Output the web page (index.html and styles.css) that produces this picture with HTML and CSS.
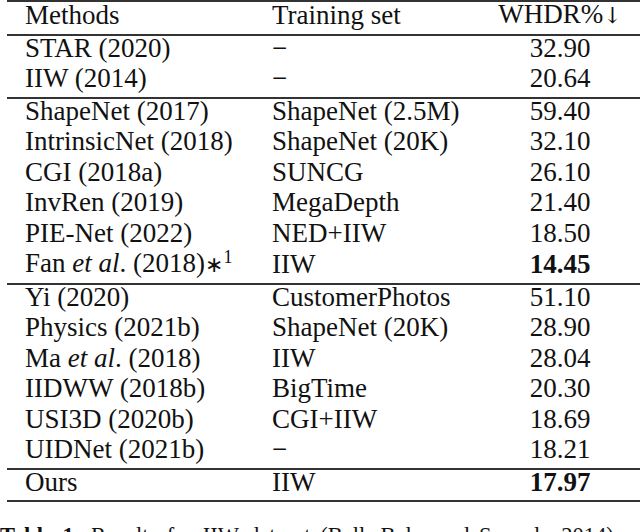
FILE: index.html
```
<!doctype html>
<html>
	<head>
		<meta charset="UTF-8">
		<title>WHDR 结果表</title>
		<link rel="stylesheet" href="styles.css">
	</head>

	<body>
		<table class="result">
			<thead>
				<tr>
					<th class="name">Methods</th>
					<th class="set">Training set</th>
					<th class="num">WHDR%<span class="arrow">↓</span></th>
				</tr>
			</thead>
			<tbody>
				<tr><td class="name">STAR (2020)</td><td class="set">−</td><td class="num">32.90</td></tr>
				<tr><td class="name">IIW (2014)</td><td class="set">−</td><td class="num">20.64</td></tr>
			</tbody>
			<tbody>
				<tr><td class="name">ShapeNet (2017)</td><td class="set">ShapeNet (2.5M)</td><td class="num">59.40</td></tr>
				<tr><td class="name">IntrinsicNet (2018)</td><td class="set">ShapeNet (20K)</td><td class="num">32.10</td></tr>
				<tr><td class="name">CGI (2018a)</td><td class="set">SUNCG</td><td class="num">26.10</td></tr>
				<tr><td class="name">InvRen (2019)</td><td class="set">MegaDepth</td><td class="num">21.40</td></tr>
				<tr><td class="name">PIE-Net (2022)</td><td class="set">NED+IIW</td><td class="num">18.50</td></tr>
				<tr><td class="name">Fan <i>et al</i>. (2018)<span class="star">∗</span><sup>1</sup></td><td class="set">IIW</td><td class="num best">14.45</td></tr>
			</tbody>
			<tbody>
				<tr><td class="name">Yi (2020)</td><td class="set">CustomerPhotos</td><td class="num">51.10</td></tr>
				<tr><td class="name">Physics (2021b)</td><td class="set">ShapeNet (20K)</td><td class="num">28.90</td></tr>
				<tr><td class="name">Ma <i>et al</i>. (2018)</td><td class="set">IIW</td><td class="num">28.04</td></tr>
				<tr><td class="name">IIDWW (2018b)</td><td class="set">BigTime</td><td class="num">20.30</td></tr>
				<tr><td class="name">USI3D (2020b)</td><td class="set">CGI+IIW</td><td class="num">18.69</td></tr>
				<tr><td class="name">UIDNet (2021b)</td><td class="set">−</td><td class="num">18.21</td></tr>
			</tbody>
			<tbody>
				<tr><td class="name">Ours</td><td class="set">IIW</td><td class="num best">17.97</td></tr>
			</tbody>
		</table>
		<p class="caption"><b>Table 1:</b> Results for IIW dataset (Bell, Bala, and Snavely 2014).</p>
	</body>
</html>
```
FILE: styles.css
```
* {
	margin: 0;
	padding: 0;
}

body {
	background-color: #fff;
	color: #111;
	font-family: "Liberation Serif", "Times New Roman", serif;
	overflow: hidden;
}

.result {
	width: 640px;
	margin-left: 7px;
	border-collapse: collapse;
	border-top: 2px solid #333;
	border-bottom: 2px solid #333;
	font-size: 27px;
}

.result tbody {
	border-top: 2px solid #333;
}

.result th,
.result td {
	height: 25.5px;
	padding: 0 0 5px 0;
	line-height: 25.5px;
	font-weight: normal;
	text-align: left;
	white-space: nowrap;
}

.result .name {
	width: 247px;
	padding-left: 18px;
}

.result .set {
	width: 208px;
}

.result .num {
	width: 160px;
	padding-right: 7px;
	text-align: center;
}

.result .best {
	font-weight: bold;
}

.arrow {
	font-family: "DejaVu Serif", serif;
	font-size: 22px;
}

.star {
	font-family: "DejaVu Sans", sans-serif;
	font-size: 22px;
}

.result sup {
	font-size: 18px;
	line-height: 0;
	vertical-align: 9px;
}

.caption {
	margin-top: 21px;
	font-size: 22.5px;
	line-height: 26px;
	word-spacing: 4px;
	white-space: nowrap;
}
```
